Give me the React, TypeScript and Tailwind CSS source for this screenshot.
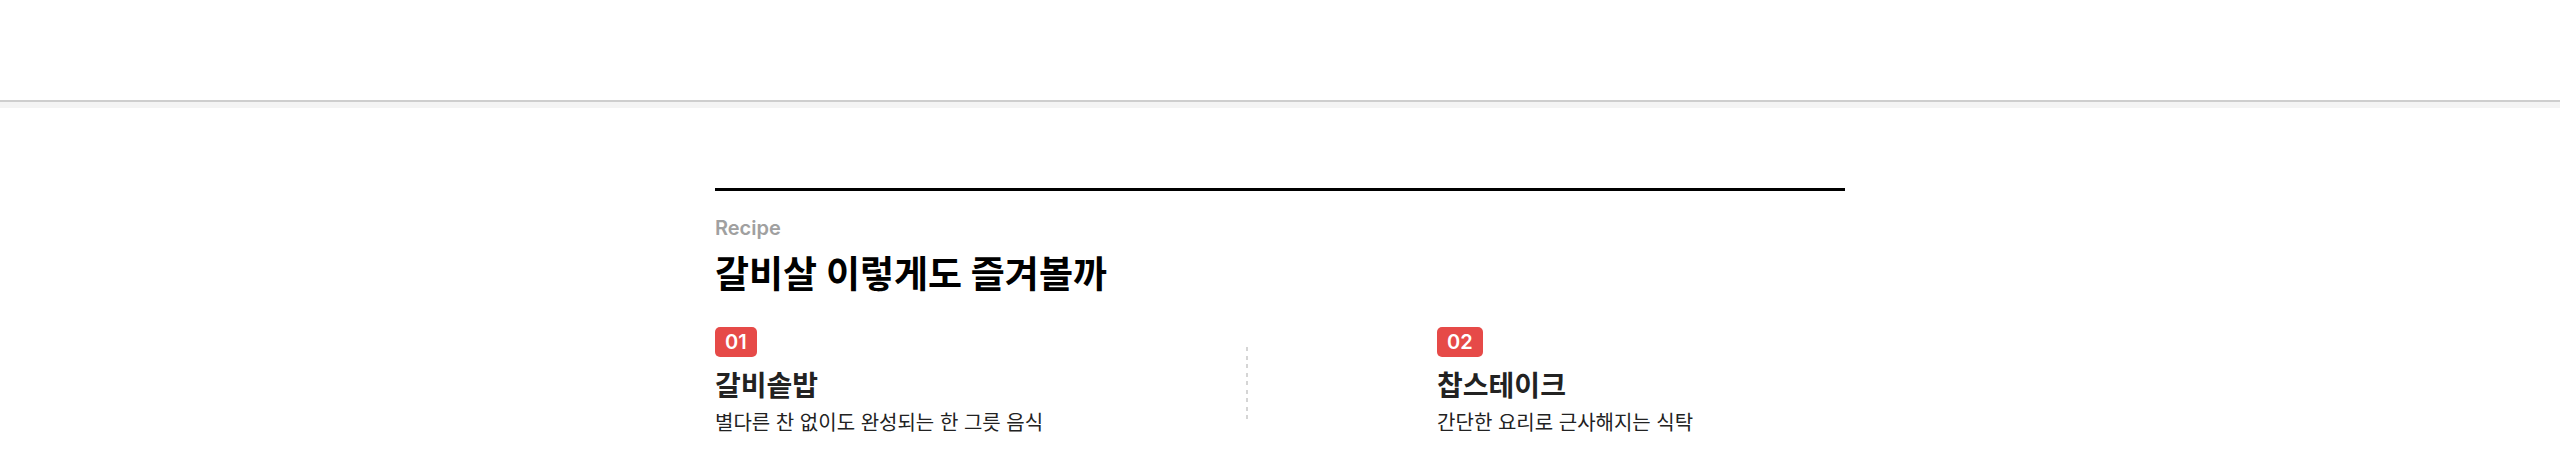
const font = "font-['Inter','Noto_Sans_CJK_KR',sans-serif]";

type Recipe = {
  no: string;
  title: string;
  description: string;
};

const recipes: Recipe[] = [
  {
    no: "01",
    title: "갈비솥밥",
    description: "별다른 찬 없이도 완성되는 한 그릇 음식",
  },
  {
    no: "02",
    title: "찹스테이크",
    description: "간단한 요리로 근사해지는 식탁",
  },
];

function RecipeItem({ recipe }: { recipe: Recipe }) {
  return (
    <div className="flex flex-col items-start">
      <span className="rounded-[5px] bg-[#e64a48] px-[10px] text-[20px] leading-[30px] font-semibold text-white">
        {recipe.no}
      </span>
      <h3 className="mt-[10px] text-[28px] leading-[38px] font-bold text-[#222]">
        {recipe.title}
      </h3>
      <p className="mt-[3px] text-[20px] leading-[30px] text-[#222]">
        {recipe.description}
      </p>
    </div>
  );
}

function DashedDivider() {
  return (
    <div
      aria-hidden
      className="mt-5 flex h-[72px] w-[2px] flex-col justify-between"
    >
      {Array.from({ length: 9 }, (_, i) => (
        <span key={i} className="h-[4px] bg-[#d5d5d5]" />
      ))}
    </div>
  );
}

export default function App() {
  return (
    <div className={`bg-white pb-8 ${font}`}>
      <header className="h-[102px] border-b-2 border-[#cecece] shadow-[0_6px_0_#f4f4f4]" />
      <main className="mx-auto mt-[86px] w-full max-w-[1130px] border-t-[3px] border-black pt-[22px]">
        <p className="text-[20px] leading-[30px] font-semibold text-[#a0a0a0]">
          Recipe
        </p>
        <h2 className="mt-[6px] text-[37px] leading-[52px] font-bold text-black">
          갈비살 이렇게도 즐겨볼까
        </h2>
        <div className="mt-[26px] flex">
          <div className="w-[47%]">
            <RecipeItem recipe={recipes[0]} />
          </div>
          <DashedDivider />
          <div className="ml-[189px] flex-1">
            <RecipeItem recipe={recipes[1]} />
          </div>
        </div>
      </main>
    </div>
  );
}
